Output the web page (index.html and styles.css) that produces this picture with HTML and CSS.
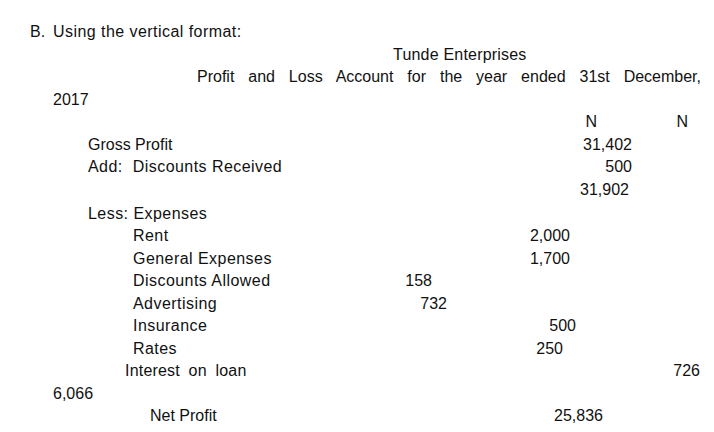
FILE: index.html
```html
<!DOCTYPE html>
<html>
<head>
<meta charset="utf-8">
<link rel="stylesheet" href="styles.css">
</head>
<body>
<div class="page">
  <div class="row q"><span class="qnum">B.</span><span class="txt">Using the vertical format:</span></div>
  <div class="row title">Tunde Enterprises</div>
  <div class="row subtitle">Profit and Loss Account for the year ended 31st December,</div>
  <div class="row year">2017</div>

  <div class="row"><span class="lbl"></span><span class="n r597">N</span><span class="n r688">N</span></div>
  <div class="row"><span class="lbl l1">Gross Profit</span><span class="n r632">31,402</span></div>
  <div class="row"><span class="lbl l1 txt">Add:<span class="sp-add"></span>Discounts Received</span><span class="n r632">500</span></div>
  <div class="row"><span class="lbl"></span><span class="n r629">31,902</span></div>
  <div class="row gap"><span class="lbl l1 txt">Less: Expenses</span></div>
  <div class="row"><span class="lbl l2 txt">Rent</span><span class="n r570">2,000</span></div>
  <div class="row"><span class="lbl l2 txt">General Expenses</span><span class="n r570">1,700</span></div>
  <div class="row"><span class="lbl l2 txt">Discounts Allowed</span><span class="n r432">158</span></div>
  <div class="row"><span class="lbl l2 txt">Advertising</span><span class="n r447">732</span></div>
  <div class="row"><span class="lbl l2 txt">Insurance</span><span class="n r576">500</span></div>
  <div class="row"><span class="lbl l2 txt">Rates</span><span class="n r563">250</span></div>
  <div class="row"><span class="lbl l3 wide">Interest on loan</span><span class="n r700">726</span></div>
  <div class="row year">6,066</div>
  <div class="row"><span class="lbl l4">Net Profit</span><span class="n r603">25,836</span></div>
</div>
</body>
</html>
```
FILE: styles.css
```css
html, body {
  margin: 0;
  padding: 0;
  background: #ffffff;
}
.page {
  width: 714px;
  height: 432px;
  box-sizing: border-box;
  padding-top: 21px;
  font-family: "Liberation Sans", Arial, sans-serif;
  font-size: 16px;
  line-height: 22.5px;
  color: #111111;
  overflow: hidden;
}
.row {
  display: flex;
  height: 22.5px;
  white-space: pre;
}
.row.gap {
  margin-top: 1.5px;
}
.txt {
  letter-spacing: 0.45px;
}
.q {
  padding-left: 30px;
}
.qnum {
  width: 23px;
}
.title {
  padding-left: 393px;
  letter-spacing: 0.2px;
}
.subtitle {
  display: block;
  margin-left: 197px;
  width: 504px;
  text-align: justify;
  text-align-last: justify;
  white-space: normal;
}
.year {
  padding-left: 53px;
}
.lbl {
  width: 380px;
  flex: none;
  box-sizing: border-box;
}
.l1 { padding-left: 88px; }
.l2 { padding-left: 133px; }
.l3 { padding-left: 125px; }
.l4 { padding-left: 150px; }
.wide { word-spacing: 4px; letter-spacing: 0.2px; }
.sp-add {
  display: inline-block;
  width: 10px;
}
.n {
  flex: none;
  text-align: right;
}
.r432 { width: 52px; }
.r447 { width: 67px; }
.r563 { width: 183px; }
.r570 { width: 190px; }
.r576 { width: 196px; }
.r597 { width: 217px; }
.r603 { width: 223px; }
.r629 { width: 249px; }
.r632 { width: 252px; }
.r688 { width: 91px; }
.r700 { width: 320px; }
```
